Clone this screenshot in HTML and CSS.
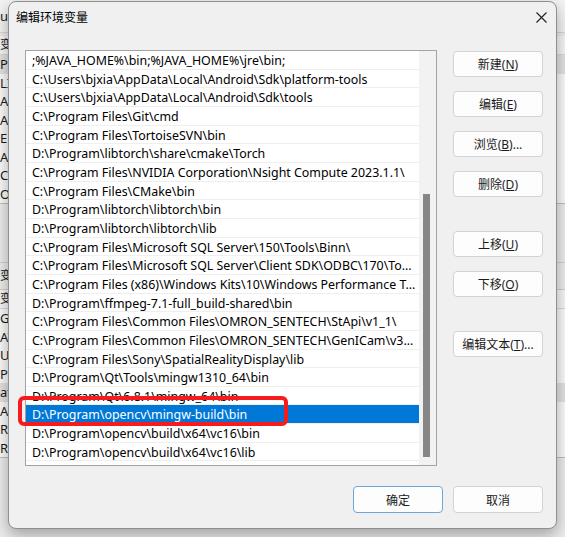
FILE: index.html
```html
<!DOCTYPE html>
<html lang="zh-CN">
<head>
    <meta charset="UTF-8">
    <meta name="viewport" content="width=device-width, initial-scale=1.0">
    <link rel="stylesheet" href="styles.css">
    <title>编辑环境变量</title>
</head>
<body>
    <div class="desk">
        <!-- the 环境变量 window behind the dialog, only its edges show -->
        <div class="backwin">
            <div class="back-head">u</div>
            <div class="back-col first">变</div>
            <ul class="back-list">
                <li class="on">P</li>
                <li>LI</li>
                <li>A</li>
                <li>A</li>
                <li>E</li>
                <li>A</li>
                <li>C</li>
                <li>OF</li>
            </ul>
            <div class="back-sep">变</div>
            <div class="back-col">变</div>
            <ul class="back-list">
                <li>GC</li>
                <li>AV</li>
                <li>U</li>
                <li>PS</li>
                <li class="on">at</li>
                <li>A</li>
                <li>R</li>
                <li>R</li>
            </ul>
        </div>

        <div class="dialog">
            <div class="titlebar">
                <span class="title">编辑环境变量</span>
                <svg class="close" width="11" height="11" viewBox="0 0 11 11">
                    <path d="M0.5 0.5 L10.5 10.5 M10.5 0.5 L0.5 10.5" stroke="#1f1f1f" stroke-width="1.1" fill="none"/>
                </svg>
            </div>

            <div class="main">
                <div class="listbox">
                    <ul class="rows">
                        <li>;%JAVA_HOME%\bin;%JAVA_HOME%\jre\bin;</li>
                        <li>C:\Users\bjxia\AppData\Local\Android\Sdk\platform-tools</li>
                        <li>C:\Users\bjxia\AppData\Local\Android\Sdk\tools</li>
                        <li>C:\Program Files\Git\cmd</li>
                        <li>C:\Program Files\TortoiseSVN\bin</li>
                        <li>D:\Program\libtorch\share\cmake\Torch</li>
                        <li>C:\Program Files\NVIDIA Corporation\Nsight Compute 2023.1.1\</li>
                        <li>C:\Program Files\CMake\bin</li>
                        <li>D:\Program\libtorch\libtorch\bin</li>
                        <li>D:\Program\libtorch\libtorch\lib</li>
                        <li>C:\Program Files\Microsoft SQL Server\150\Tools\Binn\</li>
                        <li>C:\Program Files\Microsoft SQL Server\Client SDK\ODBC\170\Tools\Binn\</li>
                        <li>C:\Program Files (x86)\Windows Kits\10\Windows Performance Toolkit\</li>
                        <li>D:\Program\ffmpeg-7.1-full_build-shared\bin</li>
                        <li>C:\Program Files\Common Files\OMRON_SENTECH\StApi\v1_1\</li>
                        <li>C:\Program Files\Common Files\OMRON_SENTECH\GenICam\v3_1\bin\</li>
                        <li>C:\Program Files\Sony\SpatialRealityDisplay\lib</li>
                        <li>D:\Program\Qt\Tools\mingw1310_64\bin</li>
                        <li>D:\Program\Qt\6.8.1\mingw_64\bin</li>
                        <li class="selected">D:\Program\opencv\mingw-build\bin</li>
                        <li>D:\Program\opencv\build\x64\vc16\bin</li>
                        <li>D:\Program\opencv\build\x64\vc16\lib</li>
                    </ul>
                    <div class="scrollbar"><div class="thumb"></div></div>
                </div>

                <div class="side">
                    <button class="btn">新建(<u>N</u>)</button>
                    <button class="btn">编辑(<u>E</u>)</button>
                    <button class="btn">浏览(<u>B</u>)...</button>
                    <button class="btn">删除(<u>D</u>)</button>
                    <button class="btn spaced">上移(<u>U</u>)</button>
                    <button class="btn">下移(<u>O</u>)</button>
                    <button class="btn spaced">编辑文本(<u>T</u>)...</button>
                </div>
            </div>

            <div class="footer">
                <button class="btn default">确定</button>
                <button class="btn">取消</button>
            </div>
        </div>
    </div>
</body>
</html>
```

FILE: styles.css
```css
body {
    margin: 0;
    padding: 0;
    font-family: "Noto Sans", "Noto Sans CJK SC", sans-serif;
    background: #e9e9e9;
}

.desk {
    position: relative;
    width: 565px;
    height: 537px;
    overflow: hidden;
}

/* background window */
.backwin {
    position: absolute;
    left: 0;
    top: 0;
    width: 565px;
    height: 537px;
    background: #ececec;
    font-size: 13px;
    color: #1a1a1a;
}

.back-head {
    height: 32px;
    line-height: 32px;
    border-bottom: 1px solid #d6d6d6;
    background: #f3f3f3;
}

.back-col {
    height: 18px;
    line-height: 18px;
    background: #f6f6f6;
    border-bottom: 1px solid #d9d9d9;
    font-size: 12px;
}

.back-col.first {
    margin-top: 3px;
}

.back-list {
    list-style: none;
    margin: 0;
    padding: 0;
    background: #fafafa;
    border-bottom: 1px solid #bdbdbd;
}

.back-list li {
    height: 18.5px;
    line-height: 18.5px;
}

.back-list li.on {
    background: #e2e2e2;
}

.back-sep {
    height: 26px;
    line-height: 26px;
    margin-top: 58px;
    border-top: 1px solid #d0d0d0;
    border-bottom: 1px solid #d0d0d0;
    font-size: 12px;
}

/* dialog */
.dialog {
    position: absolute;
    left: 8px;
    top: 1px;
    width: 549px;
    height: 528px;
    box-sizing: border-box;
    border: 1px solid #8f8f8f;
    border-radius: 8px;
    background: #f0f0f0;
    box-shadow: 0 6px 16px rgba(0, 0, 0, 0.32);
    display: flex;
    flex-direction: column;
}

.titlebar {
    height: 30px;
    display: flex;
    align-items: center;
    justify-content: space-between;
    padding: 0 9px 0 7px;
}

.title {
    font-size: 12px;
    color: #000;
}

.main {
    display: flex;
    gap: 16px;
    padding: 18px 13px 0 16px;
}

.listbox {
    width: 412px;
    height: 416px;
    box-sizing: border-box;
    border: 1px solid #a3a3a3;
    background: #fff;
    display: flex;
}

.rows {
    list-style: none;
    margin: 0;
    padding: 0;
    flex: 1;
    min-width: 0;
}

.rows li {
    position: relative;
    height: 18.667px;
    line-height: 19px;
    box-sizing: border-box;
    border-bottom: 1px solid #efefef;
    padding: 0 2px 0 6px;
    font-size: 12.4px;
    color: #000;
    white-space: nowrap;
    overflow: hidden;
    text-overflow: ellipsis;
}

.rows li.selected {
    background: #0078d7;
    color: #fff;
    overflow: visible;
}

.rows li.selected::after {
    content: "";
    position: absolute;
    left: -8px;
    top: -9px;
    width: 270px;
    height: 30px;
    box-sizing: border-box;
    border: 4px solid #f41c1c;
    border-radius: 6px;
}

.scrollbar {
    width: 17px;
    background: #f2f2f2;
    position: relative;
}

.thumb {
    position: absolute;
    left: 4px;
    top: 143px;
    width: 7px;
    height: 263px;
    background: #868686;
}

.side {
    width: 90px;
    display: flex;
    flex-direction: column;
    gap: 14px;
    padding-top: 1px;
}

.btn {
    height: 26px;
    width: 90px;
    padding: 0;
    background: #fdfdfd;
    border: 1px solid #d3d3d3;
    border-radius: 4px;
    font-family: "Noto Sans", "Noto Sans CJK SC", sans-serif;
    font-size: 12px;
    color: #1b1b1b;
}

.btn.spaced {
    margin-top: 20px;
}

.footer {
    display: flex;
    justify-content: flex-end;
    gap: 10px;
    padding-right: 13px;
    margin-top: 20px;
}

.footer .btn {
    height: 27px;
}

.btn.default {
    border-color: #6ea6da;
}
```
